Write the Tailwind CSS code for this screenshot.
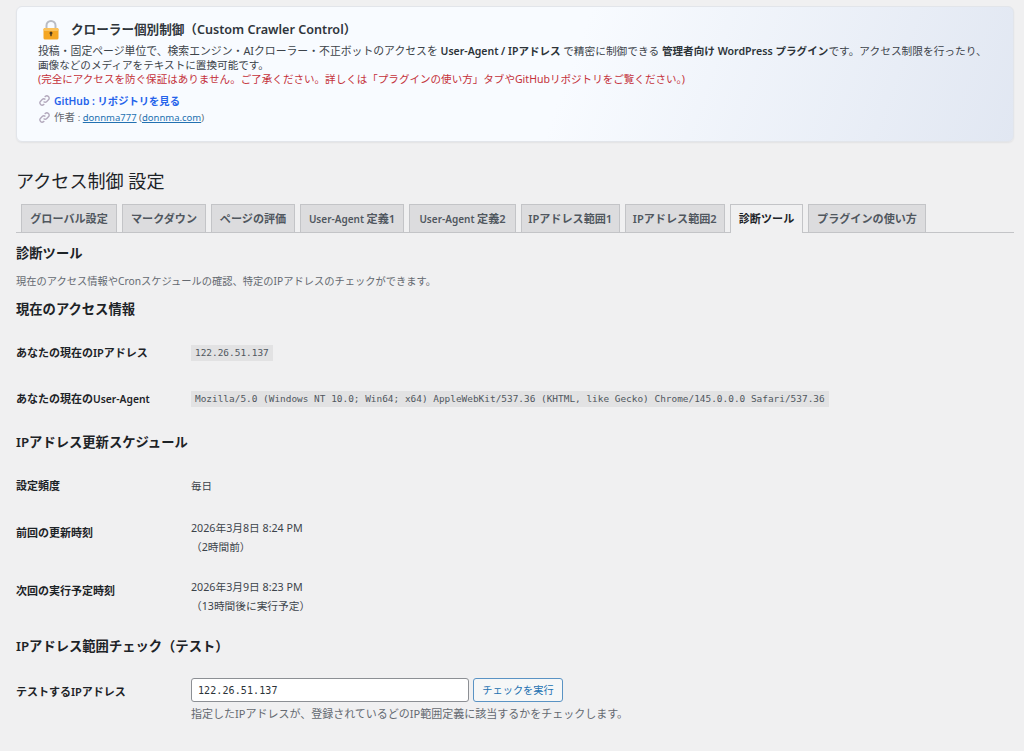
<!DOCTYPE html>
<html lang="ja">
<head>
    <meta charset="UTF-8">
    <title>アクセス制御 設定</title>
    <script src="https://cdn.jsdelivr.net/npm/@tailwindcss/browser@4"></script>
</head>
<body class="bg-[#f0f0f1] text-[#3c434a] text-[10.5px] leading-[14px] font-['Noto_Sans','Noto_Sans_CJK_JP',sans-serif] overflow-hidden h-[751px]">

    <div class="pl-[16px] pr-[10px]">
        <!-- Plugin header card -->
        <div class="mt-[6px] h-[136px] rounded-[6px] border border-[#e2e5ea] bg-linear-[110deg,#f8fbff_0%,#f8fbff_55%,#e1e7f2_100%] shadow-[0_1px_2px_rgba(0,0,0,0.06)] pl-[21px] pr-[16px] pt-[13px]">
            <div class="flex items-center h-[20px]">
                <svg class="ml-[4px] w-[18px] h-[20px]" viewBox="0 0 18 20">
                    <path d="M4.5 9V5.5a4.500 4.500 0 0 1 9 0V9" fill="none" stroke="#b9bcc4" stroke-width="2"/>
                    <rect x="1.500" y="8" width="15" height="11.500" rx="1.500" fill="#f5a623"/>
                    <rect x="1.500" y="8" width="15" height="3" rx="1.500" fill="#fbc25c"/>
                    <circle cx="9" cy="13" r="1.500" fill="#4a3a20"/>
                    <rect x="8.300" y="13" width="1.400" height="3.200" fill="#4a3a20"/>
                </svg>
                <h1 class="ml-[11px] text-[12.6px] font-semibold text-[#2f353b]">クローラー個別制御（Custom Crawler Control）</h1>
            </div>
            <p class="mt-[4px] w-[960px] text-[10.7px]"><span class="text-[10.85px]">投稿・固定ページ単位で、検索エンジン・AIクローラー・不正ボットのアクセスを</span> <strong class="text-[10.5px] font-semibold text-[#2c3338]">User-Agent / IPアドレス</strong> で精密に制御できる <strong class="text-[10.6px] font-semibold text-[#2c3338]">管理者向け WordPress プラグイン</strong>です。アクセス制限を行ったり、<br><span class="text-[10.6px]">画像などのメディアをテキストに置換可能です。</span></p>
            <p class="text-[10.55px] text-[#c4313a]">(完全にアクセスを防ぐ保証はありません。ご了承ください。詳しくは「プラグインの使い方」タブやGitHubリポジトリをご覧ください。)</p>
            <div class="mt-[6px] flex items-center h-[17px] gap-[4px]">
                <svg class="ml-[1px] w-[11px] h-[11px]" viewBox="0 0 24 24" fill="none" stroke="#b3a9bd" stroke-width="3"><path d="M10 14a5 5 0 0 0 7 0l4-4a5 5 0 0 0-7-7l-1.500 1.500"/><path d="M14 10a5 5 0 0 0-7 0l-4 4a5 5 0 0 0 7 7l1.500-1.500"/></svg>
                <a class="text-[10.3px] font-semibold text-[#2563eb]" href="#">GitHub : リポジトリを見る</a>
            </div>
            <div class="flex items-center h-[17px] gap-[4px] text-[#646970]">
                <svg class="ml-[1px] w-[11px] h-[11px]" viewBox="0 0 24 24" fill="none" stroke="#b3a9bd" stroke-width="3"><path d="M10 14a5 5 0 0 0 7 0l4-4a5 5 0 0 0-7-7l-1.500 1.500"/><path d="M14 10a5 5 0 0 0-7 0l-4 4a5 5 0 0 0 7 7l1.500-1.500"/></svg>
                <span>作者 <span class="text-[9.5px]">: <a class="underline text-[#2271b1]" href="#">donnma777</a> (<a class="underline text-[#2271b1]" href="#">donnma.com</a>)</span></span>
            </div>
        </div>

        <h1 class="mt-[28px] h-[22px] text-[18.1px] leading-[22px] text-[#1d2327]">アクセス制御 設定</h1>

        <!-- Tabs -->
        <nav class="mt-[12px] h-[29px] flex items-start pl-[5px] gap-[5px] border-b border-[#c3c4c7] text-[11.1px] font-semibold text-[#50575e]">
            <a class="w-[96px] h-[28px] flex items-center justify-center border border-[#c3c4c7] border-b-0 bg-[#dcdcde]">グローバル設定</a>
            <a class="w-[84px] h-[28px] flex items-center justify-center border border-[#c3c4c7] border-b-0 bg-[#dcdcde]">マークダウン</a>
            <a class="w-[84px] h-[28px] flex items-center justify-center border border-[#c3c4c7] border-b-0 bg-[#dcdcde]">ページの評価</a>
            <a class="w-[104px] h-[28px] flex items-center justify-center border border-[#c3c4c7] border-b-0 bg-[#dcdcde]"><span class="text-[10px]">User-Agent&nbsp;</span>定義1</a>
            <a class="w-[107px] h-[28px] flex items-center justify-center border border-[#c3c4c7] border-b-0 bg-[#dcdcde]"><span class="text-[10px]">User-Agent&nbsp;</span>定義2</a>
            <a class="w-[98.5px] h-[28px] flex items-center justify-center border border-[#c3c4c7] border-b-0 bg-[#dcdcde]">IPアドレス範囲1</a>
            <a class="w-[100.5px] h-[28px] flex items-center justify-center border border-[#c3c4c7] border-b-0 bg-[#dcdcde]">IPアドレス範囲2</a>
            <a class="w-[73px] h-[29px] flex items-center justify-center border border-[#c3c4c7] border-b-0 bg-[#f0f0f1] text-[#1d2327]">診断ツール</a>
            <a class="w-[118px] h-[28px] flex items-center justify-center border border-[#c3c4c7] border-b-0 bg-[#dcdcde]">プラグインの使い方</a>
        </nav>

        <h2 class="mt-[11px] text-[13.3px] leading-[18px] font-semibold text-[#1d2327]">診断ツール</h2>
        <p class="mt-[12px] text-[10.25px] text-[#646970]">現在のアクセス情報やCronスケジュールの確認、特定のIPアドレスのチェックができます。</p>

        <h3 class="mt-[12px] text-[13.3px] leading-[18px] font-semibold text-[#1d2327]">現在のアクセス情報</h3>
        <div class="mt-[27px] flex items-center h-[16px]">
            <div class="w-[175px] text-[11px] font-semibold text-[#1d2327]">あなたの現在のIPアドレス</div>
            <code class="bg-[#e2e2e3] px-[4px] h-[16px] leading-[16px] text-[9.43px] text-[#50575e] font-['DejaVu_Sans_Mono',monospace]">122.26.51.137</code>
        </div>
        <div class="mt-[30px] flex items-center h-[16px]">
            <div class="w-[175px] text-[11px] font-semibold text-[#1d2327]">あなたの現在の<span class="text-[10.3px]">User-Agent</span></div>
            <code class="bg-[#e2e2e3] px-[4px] h-[16px] leading-[16px] text-[9.43px] text-[#50575e] font-['DejaVu_Sans_Mono',monospace]">Mozilla/5.0 (Windows NT 10.0; Win64; x64) AppleWebKit/537.36 (KHTML, like Gecko) Chrome/145.0.0.0 Safari/537.36</code>
        </div>

        <h3 class="mt-[26px] text-[13.3px] leading-[18px] font-semibold text-[#1d2327]">IPアドレス更新スケジュール</h3>
        <div class="mt-[27px] flex items-center h-[16px]">
            <div class="w-[175px] text-[11px] font-semibold text-[#1d2327]">設定頻度</div>
            <div>毎日</div>
        </div>
        <div class="mt-[25px] flex items-start">
            <div class="w-[175px] pt-[7px] text-[11px] font-semibold text-[#1d2327]">前回の更新時刻</div>
            <div class="text-[10.7px] leading-[19px]">2026年3月8日 8:24 PM<br>（2時間前）</div>
        </div>
        <div class="mt-[21px] flex items-start">
            <div class="w-[175px] pt-[6px] text-[11px] font-semibold text-[#1d2327]">次回の実行予定時刻</div>
            <div class="text-[10.7px] leading-[18.5px]">2026年3月9日 8:23 PM<br>（13時間後に実行予定）</div>
        </div>

        <h3 class="mt-[22px] text-[13.3px] leading-[18px] font-semibold text-[#1d2327]">IPアドレス範囲チェック（テスト）</h3>
        <div class="mt-[23px] flex items-start h-[24px]">
            <div class="w-[175px] pt-[7px] text-[11px] font-semibold text-[#1d2327]">テストするIPアドレス</div>
            <input type="text" value="122.26.51.137" class="w-[278px] h-[24px] px-[6px] bg-white border border-[#8c8f94] rounded-[3px] text-[10px] tracking-[0.1px] text-[#2c3338] font-['DejaVu_Sans_Mono',monospace]">
            <button class="ml-[4px] w-[90px] h-[24px] border border-[#5a93c4] rounded-[3px] bg-[#f6f7f7] text-[#2271b1] text-[10.2px]">チェックを実行</button>
        </div>
        <p class="mt-[5px] ml-[175px] text-[11px] text-[#646970]">指定したIPアドレスが、登録されているどのIP範囲定義に該当するかをチェックします。</p>
    </div>

</body>
</html>
